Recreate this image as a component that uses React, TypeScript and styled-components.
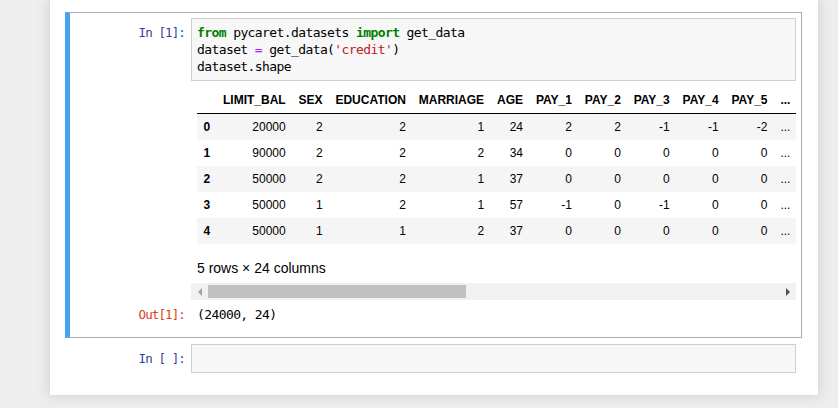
import React from "react";
import styled, { createGlobalStyle } from "styled-components";

const GlobalStyle = createGlobalStyle`
  html, body {
    margin: 0;
    padding: 0;
    background: #eeeeee;
    font-family: "Liberation Sans", Arial, sans-serif;
    font-size: 14px;
    color: #000;
  }
`;

const Page = styled.div`
  height: 408px;
  overflow: hidden;
`;

const Notebook = styled.div`
  margin-left: 50px;
  width: 768px;
  box-sizing: border-box;
  padding: 12px 16px 16px 15px;
  background: #fff;
  box-shadow: 0 0 12px 1px rgba(87, 87, 87, 0.2);
`;

const Cell = styled.div<{ $selected?: boolean }>`
  box-sizing: border-box;
  padding: 5px;
  border: 1px solid ${(p) => (p.$selected ? "#ababab" : "transparent")};
  border-left: ${(p) => (p.$selected ? "5px solid #42a5f5" : "5px solid transparent")};
`;

const Row = styled.div`
  display: flex;
  align-items: flex-start;
`;

const Prompt = styled.div<{ $out?: boolean; $top: number }>`
  flex: 0 0 116px;
  box-sizing: border-box;
  padding: ${(p) => p.$top}px 6px 0 0;
  text-align: right;
  font-family: "DejaVu Sans Mono", monospace;
  font-size: 12.5px;
  letter-spacing: -0.9px;
  line-height: 17px;
  color: ${(p) => (p.$out ? "#d84315" : "#303f9f")};
`;

const InputBox = styled.div`
  flex: 1;
  min-width: 0;
  min-height: 17px;
  padding: 5px 5px;
  background: #f7f7f7;
  border: 1px solid #cfcfcf;
  font-family: "DejaVu Sans Mono", monospace;
  font-size: 13px;
  letter-spacing: -0.6px;
  line-height: 17px;
  white-space: pre;
`;

const Kw = styled.span`
  color: #008000;
  font-weight: bold;
`;
const Op = styled.span`
  color: #aa22ff;
`;
const Str = styled.span`
  color: #ba2121;
`;

const ScrollBox = styled.div`
  flex: 1;
  min-width: 0;
`;

const ScrollInner = styled.div`
  overflow: hidden;
  padding: 6px 0 5px 6px;
`;

const Table = styled.table`
  border-collapse: collapse;
  border-spacing: 0;
  font-size: 12px;
  white-space: nowrap;

  thead {
    border-bottom: 1px solid #000;
  }
  th, td {
    padding: 6px 6.45px;
    line-height: normal;
    text-align: right;
  }
  th {
    font-weight: bold;
  }
  tbody th {
    text-align: left;
  }
  tbody tr:nth-child(odd) {
    background: #f5f5f5;
  }
`;

const Caption = styled.p`
  margin: 14px 0 0;
  line-height: 20px;
`;

const Scrollbar = styled.div`
  height: 17px;
  background: #f1f1f1;
  display: flex;
  align-items: center;
`;

const Arrow = styled.div<{ $dir: "left" | "right"; $dim?: boolean }>`
  flex: 0 0 17px;
  height: 17px;
  display: flex;
  align-items: center;
  justify-content: center;
  &::before {
    content: "";
    width: 0;
    height: 0;
    border-top: 4px solid transparent;
    border-bottom: 4px solid transparent;
    ${(p) =>
      p.$dir === "left"
        ? `border-right: 4px solid ${p.$dim ? "#a3a3a3" : "#505050"};`
        : `border-left: 4px solid ${p.$dim ? "#a3a3a3" : "#505050"};`}
  }
`;

const Track = styled.div`
  flex: 1;
  height: 13px;
`;

const Thumb = styled.div`
  height: 13px;
  background: #c1c1c1;
`;

const OutText = styled.div`
  flex: 1;
  padding: 6px 6px 9px;
  font-family: "DejaVu Sans Mono", monospace;
  font-size: 13px;
  letter-spacing: -0.6px;
  line-height: 17px;
`;

const columns = [
  "LIMIT_BAL",
  "SEX",
  "EDUCATION",
  "MARRIAGE",
  "AGE",
  "PAY_1",
  "PAY_2",
  "PAY_3",
  "PAY_4",
  "PAY_5",
  "...",
];

const rows: string[][] = [
  ["20000", "2", "2", "1", "24", "2", "2", "-1", "-1", "-2", "..."],
  ["90000", "2", "2", "2", "34", "0", "0", "0", "0", "0", "..."],
  ["50000", "2", "2", "1", "37", "0", "0", "0", "0", "0", "..."],
  ["50000", "1", "2", "1", "57", "-1", "0", "-1", "0", "0", "..."],
  ["50000", "1", "1", "2", "37", "0", "0", "0", "0", "0", "..."],
];

export default function App() {
  return (
    <Page>
      <GlobalStyle />
      <Notebook>
        <Cell $selected>
          <Row>
            <Prompt $top={6}>In [1]:</Prompt>
            <InputBox>
              <Kw>from</Kw> pycaret.datasets <Kw>import</Kw> get_data{"\n"}
              dataset <Op>=</Op> get_data(<Str>'credit'</Str>){"\n"}
              dataset.shape
            </InputBox>
          </Row>
          <Row>
            <Prompt $top={0} />
            <ScrollBox>
              <ScrollInner>
                <Table>
                  <thead>
                    <tr>
                      <th></th>
                      {columns.map((c) => (
                        <th key={c}>{c}</th>
                      ))}
                    </tr>
                  </thead>
                  <tbody>
                    {rows.map((r, i) => (
                      <tr key={i}>
                        <th>{i}</th>
                        {r.map((v, j) => (
                          <td key={j}>{v}</td>
                        ))}
                      </tr>
                    ))}
                  </tbody>
                </Table>
                <Caption>5 rows × 24 columns</Caption>
              </ScrollInner>
              <Scrollbar>
                <Arrow $dir="left" $dim />
                <Track>
                  <Thumb style={{ width: "258px" }} />
                </Track>
                <Arrow $dir="right" />
              </Scrollbar>
            </ScrollBox>
          </Row>
          <Row>
            <Prompt $out $top={6}>Out[1]:</Prompt>
            <OutText>(24000, 24)</OutText>
          </Row>
        </Cell>
        <Cell>
          <Row>
            <Prompt $top={6}>In [ ]:</Prompt>
            <InputBox></InputBox>
          </Row>
        </Cell>
      </Notebook>
    </Page>
  );
}
